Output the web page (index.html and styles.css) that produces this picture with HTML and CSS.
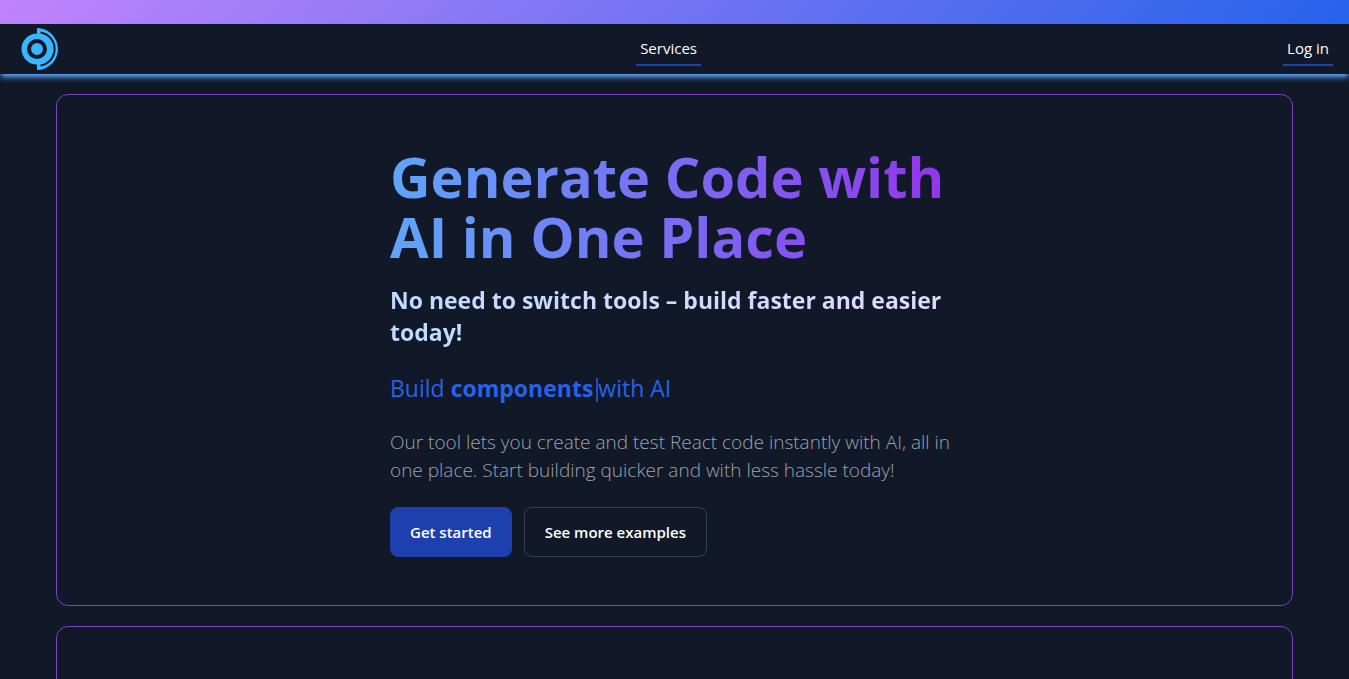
FILE: index.html
```html
<!DOCTYPE html>
<html lang="en">
<head>
<meta charset="utf-8">
<meta name="viewport" content="width=device-width, initial-scale=1">
<title>Generate Code with AI</title>
<link rel="stylesheet" href="styles.css">
</head>
<body>
<div class="banner"></div>
<header class="header">
  <a class="logo" href="#" aria-label="Home">
    <svg viewBox="-5 0 42 42" width="42" height="42" aria-hidden="true">
      <path class="logo-fill" d="M16 0A21 21 0 0 1 16 42V36.500A15.500 15.500 0 1 1 16 5.500Z"/>
      <path class="logo-gap" d="M19.500 4.500A16.700 16.700 0 0 1 19.500 37.500" />
      <circle class="logo-ring" cx="16" cy="21" r="8"/>
    </svg>
  </a>
  <nav><a class="nav-link" href="#">Services</a></nav>
  <a class="nav-link" href="#">Log in</a>
</header>
<main class="main">
  <section class="card">
    <div class="hero">
      <h1 class="title">Generate Code with AI in One Place</h1>
      <h2 class="subtitle">No need to switch tools – build faster and easier today!</h2>
      <p class="build">Build <strong class="typed">components</strong><span class="cursor"></span>with AI</p>
      <p class="description">Our tool lets you create and test React code instantly with AI, all in one place. Start building quicker and with less hassle today!</p>
      <div class="actions">
        <button class="button primary" type="button">Get started</button>
        <button class="button secondary" type="button">See more examples</button>
      </div>
    </div>
  </section>
  <section class="card"></section>
</main>
</body>
</html>
```
FILE: styles.css
```css
* { box-sizing: border-box; }
body {
  margin: 0;
  background: #111827;
  color: #fff;
  font-family: "Open Sans", "Noto Sans", sans-serif;
  font-size: 15px;
}
.banner { height: 24px; background: linear-gradient(135deg, #c084fc, #2563eb); }
.header {
  display: flex;
  justify-content: space-between;
  align-items: center;
  height: 50px;
  padding: 0 16px;
  background: #111827;
  box-shadow: 0 4px 6px -1px #60a5fa, 0 2px 4px -2px #60a5fa;
}
.logo { display: flex; width: 38px; }
.logo svg { flex: none; }
.logo-fill { fill: #38b6ff; }
.logo-gap { fill: none; stroke: #111827; stroke-width: 2; }
.logo-ring { fill: none; stroke: #111827; stroke-width: 4; }
.nav-link {
  display: block;
  height: 34px;
  padding: 0 4px;
  line-height: 32px;
  border-bottom: 2px solid #1e40af;
  color: #fff;
  text-decoration: none;
}
.main {
  display: flex;
  flex-direction: column;
  gap: 20px;
  height: calc(100vh - 74px);
  padding: 20px 56px 0;
  overflow: hidden;
}
.card {
  flex: none;
  min-height: 512px;
  padding: 51px 24px 48px;
  border: 1px solid #7e42c4;
  border-radius: 12px;
}
.hero { max-width: 569px; margin: 0 auto; }
.title {
  margin: 0 0 18px;
  font-size: 56px;
  line-height: 60px;
  font-weight: 700;
  color: transparent;
  background: linear-gradient(to right, #60a5fa, #9333ea);
  background-clip: text;
  -webkit-background-clip: text;
}
.subtitle {
  margin: 0 0 24px;
  font-size: 23px;
  line-height: 32px;
  font-weight: 700;
  color: transparent;
  background: linear-gradient(to right, #bfdbfe, #e4d9fe);
  background-clip: text;
  -webkit-background-clip: text;
}
.build { margin: 0 0 24px; font-size: 23px; line-height: 32px; color: #2563eb; }
.typed { font-weight: 700; }
.cursor {
  display: inline-block;
  width: 2px;
  height: 24px;
  margin-left: 3px;
  background: #1d4fbd;
  vertical-align: -5px;
}
.description { margin: 0 0 23px; font-size: 19px; line-height: 28px; font-weight: 300; color: #9ca3af; }
.actions { display: flex; gap: 12px; }
.button {
  height: 50px;
  padding: 0 20px;
  border: 1px solid #374151;
  border-radius: 8px;
  background: transparent;
  color: #fff;
  font: 600 15px/24px "Open Sans", "Noto Sans", sans-serif;
}
.primary { padding: 0 19px; background: #1e40af; border-color: #1e40af; }
```
